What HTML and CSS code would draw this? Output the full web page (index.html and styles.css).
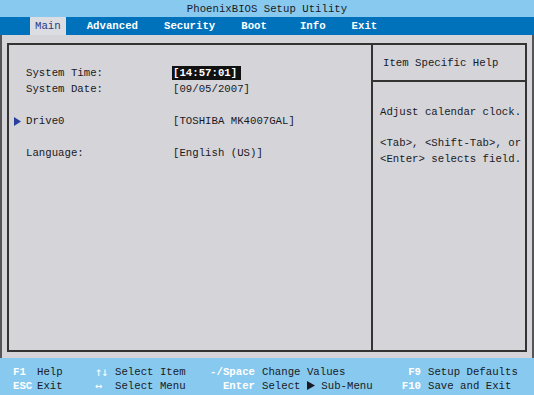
FILE: index.html
```html
<!DOCTYPE html>
<html lang="en">
<head>
  <meta charset="UTF-8">
  <title>PhoenixBIOS Setup Utility</title>
  <link rel="stylesheet" href="styles.css">
</head>
<body>
  <div class="screen">
    <div class="title">PhoenixBIOS Setup Utility</div>

    <div class="menu">
      <span class="tab active">Main</span>
      <span class="tab">Advanced</span>
      <span class="tab">Security</span>
      <span class="tab">Boot</span>
      <span class="tab info">Info</span>
      <span class="tab">Exit</span>
    </div>

    <div class="main">
      <div class="box">
        <div class="items">
          <div class="row">
            <span class="mark"></span>
            <span class="label">System Time:</span>
            <span class="value"><span class="sel">[14:57:01]</span></span>
          </div>
          <div class="row">
            <span class="mark"></span>
            <span class="label">System Date:</span>
            <span class="value">[09/05/2007]</span>
          </div>
          <div class="row blank"></div>
          <div class="row">
            <span class="mark">
              <svg width="7" height="9" viewBox="0 0 7 9"><path d="M0 0 L7 4.5 L0 9 Z" fill="#2a3f9e"/></svg>
            </span>
            <span class="label">Drive0</span>
            <span class="value">[TOSHIBA MK4007GAL]</span>
          </div>
          <div class="row blank"></div>
          <div class="row">
            <span class="mark"></span>
            <span class="label">Language:</span>
            <span class="value">[English (US)]</span>
          </div>
        </div>

        <div class="help">
          <div class="help-head">Item Specific Help</div>
          <div class="help-body">
            <p>Adjust calendar clock.</p>
            <p>&lt;Tab&gt;, &lt;Shift-Tab&gt;, or<br>&lt;Enter&gt; selects field.</p>
          </div>
        </div>
      </div>
    </div>

    <div class="footer">
      <span class="key">F1</span>
      <span class="desc">Help</span>
      <span class="key arrow">&uarr;&darr;</span>
      <span class="desc">Select Item</span>
      <span class="key right">-/Space</span>
      <span class="desc pad">Change Values</span>
      <span class="key right">F9</span>
      <span class="desc pad">Setup Defaults</span>

      <span class="key">ESC</span>
      <span class="desc">Exit</span>
      <span class="key arrow">&harr;</span>
      <span class="desc">Select Menu</span>
      <span class="key right">Enter</span>
      <span class="desc pad">Select <svg class="tri" width="8" height="9" viewBox="0 0 8 9"><path d="M0 0 L8 4.5 L0 9 Z" fill="#1a1a24"/></svg> Sub-Menu</span>
      <span class="key right">F10</span>
      <span class="desc pad">Save and Exit</span>
    </div>
  </div>
</body>
</html>
```

FILE: styles.css
```css
body {
  margin: 0;
  font-family: "Liberation Mono", "DejaVu Sans Mono", monospace;
  font-size: 10.7px;
  color: #1a1a24;
}
.screen {
  width: 534px;
  height: 395px;
  display: flex;
  flex-direction: column;
}
.title {
  height: 17px;
  line-height: 18px;
  background: #87c9ef;
  text-align: center;
}
.menu {
  height: 18px;
  background: #0072bc;
  display: flex;
  gap: 16px;
  padding-left: 30px;
}
.tab {
  line-height: 18px;
  padding: 0 5px;
  color: #fff;
  font-weight: bold;
}
.tab.active {
  background: #dcdce3;
  color: #2a3a86;
  font-weight: normal;
}
.tab.info {
  margin-left: 7px;
}
.main {
  flex: 1;
  background: #d4d4d9;
  border-left: 2px solid #555;
  border-right: 2px solid #555;
  padding: 8px 5px 6px 5px;
  display: flex;
}
.box {
  flex: 1;
  border: 2px solid #333;
  display: grid;
  grid-template-columns: 364px 1fr;
}
.items {
  padding-top: 20px;
  border-right: 2px solid #333;
}
.row {
  display: flex;
  height: 16px;
  line-height: 16px;
}
.mark {
  width: 17px;
  display: flex;
  align-items: center;
  justify-content: flex-end;
  padding-right: 5px;
  box-sizing: border-box;
}
.label {
  width: 147px;
}
.sel {
  background: #111;
  color: #fff;
  font-weight: bold;
  padding: 1px 4px 1px 1px;
  margin-left: -1px;
}
.help-head {
  height: 35px;
  line-height: 36px;
  padding-left: 10px;
  border-bottom: 2px solid #333;
}
.help-body {
  padding: 22px 0 0 7px;
  line-height: 16px;
}
.help-body p {
  margin: 0 0 15px 0;
}
.footer {
  height: 37px;
  background: #87c9ef;
  box-sizing: border-box;
  padding: 7px 0 0 13px;
  display: grid;
  grid-template-columns: 24px 58px 20px 85px 55px 130px 36px 1fr;
  grid-auto-rows: 14px;
  line-height: 14px;
}
.key {
  color: #fff;
  font-weight: bold;
  white-space: nowrap;
}
.key.arrow {
  font-weight: normal;
  font-family: "DejaVu Sans Mono", monospace;
  font-size: 12px;
  letter-spacing: -1px;
}
.key.right {
  text-align: right;
}
.desc {
  white-space: nowrap;
}
.desc.pad {
  padding-left: 7px;
}
.tri {
  vertical-align: -1px;
}
```
